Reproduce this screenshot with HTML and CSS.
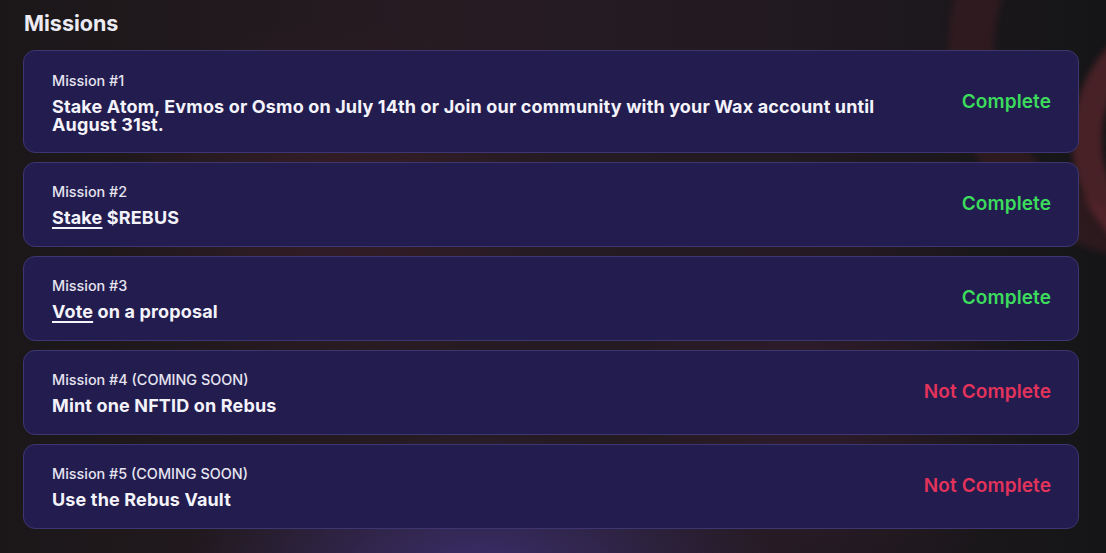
FILE: index.html
```html
<!DOCTYPE html>
<html lang="en">
<head>
<meta charset="utf-8">
<title>Missions</title>
<link rel="stylesheet" href="styles.css">
</head>
<body>
<div class="bg">
  <div class="ring ring-a"></div>
  <div class="ring ring-b"></div>
</div>
<main class="page">
  <h2 class="heading">Missions</h2>
  <ul class="missions">
    <li class="card">
      <div class="info">
        <div class="label">Mission #1</div>
        <div class="title">Stake Atom, Evmos or Osmo on July 14th or Join our community with your Wax account until August 31st.</div>
      </div>
      <div class="status done">Complete</div>
    </li>
    <li class="card">
      <div class="info">
        <div class="label">Mission #2</div>
        <div class="title"><a class="link" href="#">Stake</a> $REBUS</div>
      </div>
      <div class="status done">Complete</div>
    </li>
    <li class="card">
      <div class="info">
        <div class="label">Mission #3</div>
        <div class="title"><a class="link" href="#">Vote</a> on a proposal</div>
      </div>
      <div class="status done">Complete</div>
    </li>
    <li class="card">
      <div class="info">
        <div class="label">Mission #4 (COMING SOON)</div>
        <div class="title">Mint one NFTID on Rebus</div>
      </div>
      <div class="status todo">Not Complete</div>
    </li>
    <li class="card">
      <div class="info">
        <div class="label">Mission #5 (COMING SOON)</div>
        <div class="title">Use the Rebus Vault</div>
      </div>
      <div class="status todo">Not Complete</div>
    </li>
  </ul>
</main>
</body>
</html>
```
FILE: styles.css
```css
* { box-sizing: border-box; }
html, body { margin: 0; padding: 0; }
body {
  width: 1106px;
  height: 553px;
  overflow: hidden;
  background: #1a1619;
  font-family: Inter, "Noto Sans", sans-serif;
  color: #f3f1fb;
  position: relative;
}
.bg {
  position: absolute;
  inset: 0;
  overflow: hidden;
  background:
    radial-gradient(ellipse 420px 200px at 480px 570px, rgba(62,50,125,0.8), transparent 70%),
    radial-gradient(ellipse 320px 260px at 330px 200px, rgba(70,32,48,0.5), transparent 70%),
    radial-gradient(ellipse 300px 300px at 820px 400px, rgba(70,30,60,0.4), transparent 70%),
    linear-gradient(90deg, #1b1719 0%, #271b22 40%, #221a21 70%, #151517 100%);
}
.ring {
  position: absolute;
  border-radius: 50%;
  filter: blur(3px);
}
.ring-a {
  left: 948px;
  top: -160px;
  width: 420px;
  height: 420px;
  border: 46px solid rgba(72,32,38,0.45);
}
.ring-b {
  left: 1072px;
  top: 10px;
  width: 240px;
  height: 260px;
  border: 30px solid rgba(105,42,48,0.6);
}
.page {
  position: relative;
  padding: 9px 27px 0 23px;
}
.heading {
  margin: 0 0 13px 1px;
  font-size: 21.5px;
  line-height: 28px;
  font-weight: 700;
  color: #ecebf2;
}
.missions {
  list-style: none;
  margin: 0;
  padding: 0;
  display: flex;
  flex-direction: column;
  gap: 9px;
}
.card {
  display: flex;
  align-items: center;
  justify-content: space-between;
  gap: 40px;
  min-height: 85px;
  padding: 16px 27px 16px 28px;
  background: #221c4f;
  border: 1px solid #3d3670;
  border-radius: 12px;
}
.card:first-child { min-height: 103px; padding-top: 19px; }
.info { display: flex; flex-direction: column; gap: 8px; }
.label {
  font-size: 14.4px;
  font-weight: 500;
  line-height: 18px;
  color: #e6e4f0;
}
.title {
  font-size: 18px;
  font-weight: 700;
  line-height: 18px;
  letter-spacing: 0.15px;
  color: #f4f3fa;
  max-width: 850px;
}
.link {
  color: inherit;
  text-decoration: underline;
  text-underline-offset: 3px;
  text-decoration-thickness: 2px;
}
.status {
  font-size: 19px;
  font-weight: 600;
  letter-spacing: 0.1px;
  white-space: nowrap;
  margin-bottom: 3px;
}
.done { color: #3cdb5c; }
.todo { color: #e3335b; }
```
